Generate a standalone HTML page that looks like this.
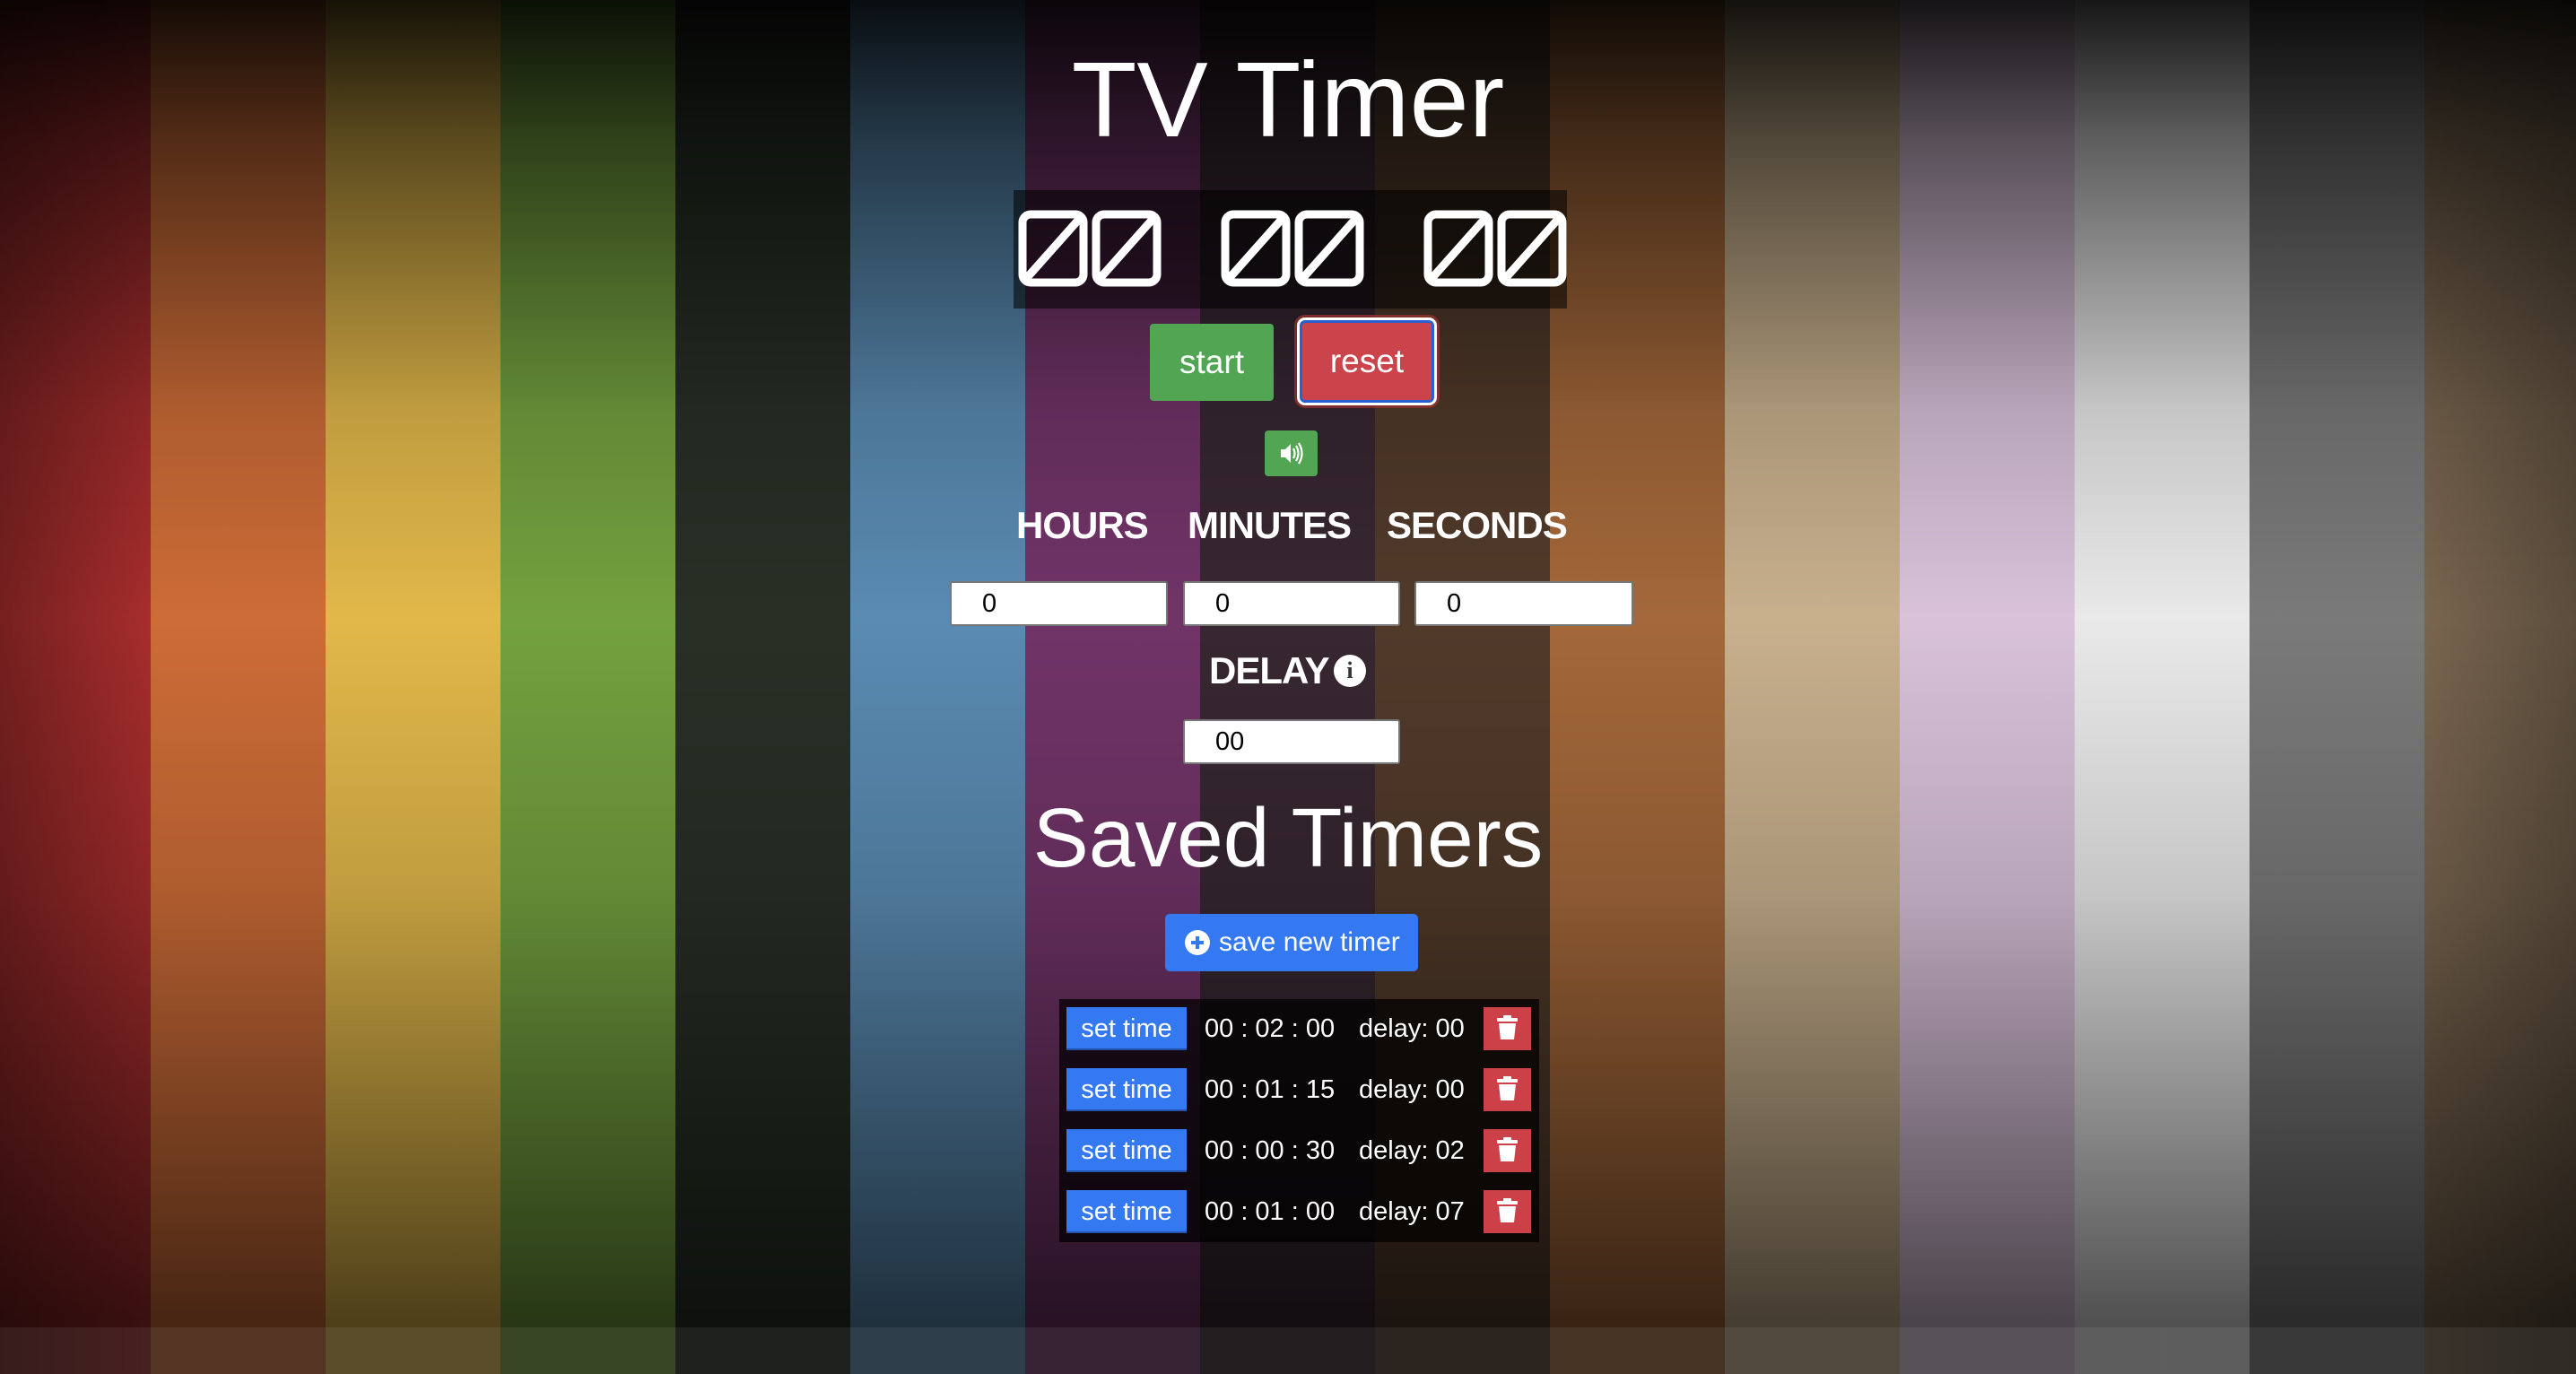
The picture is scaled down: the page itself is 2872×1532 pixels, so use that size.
<!DOCTYPE html>
<html><head><meta charset="utf-8"><style>
*{margin:0;padding:0;box-sizing:border-box}
body{width:2872px;height:1532px;overflow:hidden;position:relative;font-family:"Liberation Sans",sans-serif;background:#111;color:#fff}
.s{position:absolute;top:0;height:1532px}
.ov{position:absolute;left:0;top:0;width:2872px;height:1532px;background:linear-gradient(to bottom,rgba(0,0,0,.9) 0%,rgba(0,0,0,.6) 10%,rgba(0,0,0,.15) 30%,rgba(0,0,0,0) 45%,rgba(0,0,0,.15) 65%,rgba(0,0,0,.55) 90%,rgba(0,0,0,.65) 96%)}
.ov2{position:absolute;left:0;top:0;width:2872px;height:1532px;background:linear-gradient(to right,rgba(0,0,0,.3) 0%,rgba(0,0,0,0) 6%,rgba(0,0,0,0) 94%,rgba(0,0,0,.25) 100%)}
.floor{position:absolute;left:0;top:1480px;width:2872px;height:52px;background:rgba(255,255,255,.07)}
.a{position:absolute}
.c{text-align:center}
.inp{position:absolute;background:#fff;border:2px solid #777;border-radius:3px;height:50px;color:#000;font-size:29px;line-height:46px;padding-left:34px}
.lbl{position:absolute;font-size:42px;font-weight:bold;top:562px;letter-spacing:-1px}
.st{position:absolute;left:1189px;width:134px;height:48px;background:#3479f2;font-size:29px;line-height:48px;text-align:center;border-bottom:2px solid #2454b0}
.tm{position:absolute;left:1343px;font-size:29px;line-height:48px}
.dl{position:absolute;left:1515px;font-size:29px;line-height:48px}
.tr{position:absolute;left:1654px;width:53px;height:48px;background:#cc4148}
</style></head><body>
<div class="s" style="left:0;width:168px;background:#a82d2d"></div>
<div class="s" style="left:168px;width:195px;background:#cd6c37"></div>
<div class="s" style="left:363px;width:195px;background:#e2b84a"></div>
<div class="s" style="left:558px;width:195px;background:#74a13f"></div>
<div class="s" style="left:753px;width:195px;background:#283026"></div>
<div class="s" style="left:948px;width:195px;background:#5a8bb2"></div>
<div class="s" style="left:1143px;width:195px;background:#713468"></div>
<div class="s" style="left:1338px;width:195px;background:#372731"></div>
<div class="s" style="left:1533px;width:195px;background:#513a2a"></div>
<div class="s" style="left:1728px;width:195px;background:#a4683a"></div>
<div class="s" style="left:1923px;width:195px;background:#c8b08d"></div>
<div class="s" style="left:2118px;width:195px;background:#d9c2da"></div>
<div class="s" style="left:2313px;width:195px;background:#e9e9e9"></div>
<div class="s" style="left:2508px;width:195px;background:#7a7a7a"></div>
<div class="s" style="left:2703px;width:169px;background:#7a6650"></div>
<div class="ov"></div><div class="ov2"></div><div class="floor"></div>

<div class="a c" style="left:1036px;width:800px;top:44px;font-size:119px;line-height:136px">TV Timer</div>

<div class="a" style="left:1130px;top:212px;width:617px;height:132px;background:rgba(0,0,0,.55)">
<svg width="617" height="132" viewBox="0 0 617 132" fill="none" stroke="#fff" stroke-width="9">
<g id="d"><rect x="10" y="27" width="68" height="76" rx="9"/><line x1="12" y1="101" x2="76" y2="29"/></g>
<use href="#d" x="82"/><use href="#d" x="226"/><use href="#d" x="308"/><use href="#d" x="452"/><use href="#d" x="534"/>
</svg></div>

<div class="a c" style="left:1282px;top:361px;width:138px;height:86px;background:#52a552;border-radius:4px;font-size:37px;line-height:86px">start</div>
<div class="a c" style="left:1449px;top:357px;width:150px;height:92px;background:#cc444b;border-radius:6px;border:3px solid #2a5fd0;box-shadow:0 0 0 3px #fff,0 0 0 6px rgba(160,50,50,.7);font-size:37px;line-height:86px">reset</div>

<div class="a" style="left:1410px;top:480px;width:59px;height:51px;background:#52a552;border-radius:4px">
<svg width="59" height="51" viewBox="0 0 59 51"><path d="M18 21h5l6-6v21l-6-6h-5z" fill="#fff"/><path d="M32 20q3 5.5 0 11M35 17q5 8.5 0 17M38 14q7 11.5 0 23" stroke="#fff" stroke-width="2.2" fill="none"/></svg></div>

<div class="lbl" style="left:1133px">HOURS</div>
<div class="lbl" style="left:1324px">MINUTES</div>
<div class="lbl" style="left:1546px">SECONDS</div>

<div class="inp" style="left:1059px;top:648px;width:243px">0</div>
<div class="inp" style="left:1319px;top:648px;width:242px">0</div>
<div class="inp" style="left:1577px;top:648px;width:244px">0</div>

<div class="lbl" style="left:1348px;top:724px">DELAY</div>
<div class="a" style="left:1487px;top:730px;width:36px;height:36px;border-radius:50%;background:#fff;color:#333;font-weight:bold;font-size:26px;line-height:36px;text-align:center;font-family:'Liberation Serif',serif">i</div>
<div class="inp" style="left:1319px;top:802px;width:242px">00</div>

<div class="a c" style="left:1036px;top:876px;width:800px;font-size:93px;line-height:116px">Saved Timers</div>

<div class="a" style="left:1299px;top:1019px;width:282px;height:64px;background:#3479f2;border-radius:5px;font-size:30px;line-height:64px;padding-left:60px">save new timer
<svg class="a" style="left:22px;top:18px" width="28" height="28" viewBox="0 0 28 28"><circle cx="14" cy="14" r="14" fill="#fff"/><path d="M14 7v14M7 14h14" stroke="#3479f2" stroke-width="4"/></svg></div>

<div class="a" style="left:1181px;top:1114px;width:535px;height:271px;background:rgba(0,0,0,.72)"></div>
<div class="st" style="top:1123px">set time</div><div class="tm" style="top:1123px">00 : 02 : 00</div><div class="dl" style="top:1123px">delay: 00</div><div class="tr" style="top:1123px"></div>
<div class="st" style="top:1191px">set time</div><div class="tm" style="top:1191px">00 : 01 : 15</div><div class="dl" style="top:1191px">delay: 00</div><div class="tr" style="top:1191px"></div>
<div class="st" style="top:1259px">set time</div><div class="tm" style="top:1259px">00 : 00 : 30</div><div class="dl" style="top:1259px">delay: 02</div><div class="tr" style="top:1259px"></div>
<div class="st" style="top:1327px">set time</div><div class="tm" style="top:1327px">00 : 01 : 00</div><div class="dl" style="top:1327px">delay: 07</div><div class="tr" style="top:1327px"></div>
<svg class="a" style="left:1654px;top:1123px" width="53" height="272" viewBox="0 0 53 272">
<g id="t" fill="#fff"><rect x="15" y="12" width="23" height="4" rx="1"/><rect x="22" y="9" width="9" height="4" rx="1"/><path d="M17 18h19l-2 18h-15z"/></g>
<use href="#t" y="68"/><use href="#t" y="136"/><use href="#t" y="204"/></svg>
</body></html>
